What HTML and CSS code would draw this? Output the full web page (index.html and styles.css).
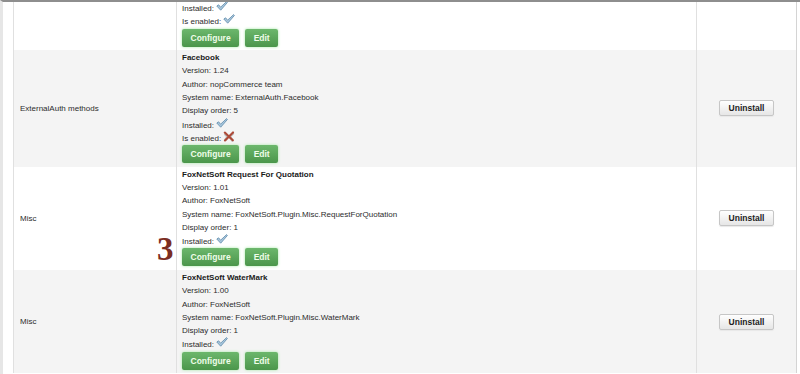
FILE: index.html
```html
<!DOCTYPE html>
<html lang="en">
<head>
    <meta charset="UTF-8">
    <title>Plugins</title>
    <link rel="stylesheet" href="styles.css">
</head>
<body>
    <div class="frame">
        <table class="grid">
            <colgroup>
                <col class="col-group">
                <col class="col-info">
                <col class="col-actions">
            </colgroup>
            <!-- end of the previous plugin -->
            <tr class="row-white">
                <td class="group"></td>
                <td class="info first">
                    <div>Installed: <svg class="ico" viewBox="0 0 12 10"><path d="M0.8 5 L2.6 3.8 L4.6 6.2 L10.6 0.6 L11.4 1.5 L4.7 9.2 Z" fill="#a9c8de" stroke="#6b93b1" stroke-width="0.9" stroke-linejoin="round"/></svg></div>
                    <div>Is enabled: <svg class="ico" viewBox="0 0 12 10"><path d="M0.8 5 L2.6 3.8 L4.6 6.2 L10.6 0.6 L11.4 1.5 L4.7 9.2 Z" fill="#a9c8de" stroke="#6b93b1" stroke-width="0.9" stroke-linejoin="round"/></svg></div>
                    <div class="buttons"><span class="btn-green">Configure</span><span class="btn-green">Edit</span></div>
                </td>
                <td class="actions"></td>
            </tr>
            <tr class="row-gray">
                <td class="group">ExternalAuth methods</td>
                <td class="info">
                    <div class="title">Facebook</div>
                    <div>Version: 1.24</div>
                    <div>Author: nopCommerce team</div>
                    <div>System name: ExternalAuth.Facebook</div>
                    <div>Display order: 5</div>
                    <div>Installed: <svg class="ico" viewBox="0 0 12 10"><path d="M0.8 5 L2.6 3.8 L4.6 6.2 L10.6 0.6 L11.4 1.5 L4.7 9.2 Z" fill="#a9c8de" stroke="#6b93b1" stroke-width="0.9" stroke-linejoin="round"/></svg></div>
                    <div>Is enabled: <svg class="ico cross" viewBox="0 0 12 11"><path d="M2.4 3.4 L4.8 5.8 L2.6 8.6 M9.8 2.6 L6.6 5.6 L9.4 9.4" stroke="#bdbdbd" stroke-width="2.6" fill="none" stroke-linecap="round"/><path d="M1.8 1.6 L9.8 9.2 M10 1.4 L2 9.4" stroke="#ad4a38" stroke-width="2.1" fill="none" stroke-linecap="round"/></svg></div>
                    <div class="buttons"><span class="btn-green">Configure</span><span class="btn-green">Edit</span></div>
                </td>
                <td class="actions"><span class="btn-light">Uninstall</span></td>
            </tr>
            <tr class="row-white">
                <td class="group">Misc</td>
                <td class="info">
                    <div class="title">FoxNetSoft Request For Quotation</div>
                    <div>Version: 1.01</div>
                    <div>Author: FoxNetSoft</div>
                    <div>System name: FoxNetSoft.Plugin.Misc.RequestForQuotation</div>
                    <div>Display order: 1</div>
                    <div>Installed: <svg class="ico" viewBox="0 0 12 10"><path d="M0.8 5 L2.6 3.8 L4.6 6.2 L10.6 0.6 L11.4 1.5 L4.7 9.2 Z" fill="#a9c8de" stroke="#6b93b1" stroke-width="0.9" stroke-linejoin="round"/></svg></div>
                    <div class="buttons"><span class="btn-green">Configure</span><span class="btn-green">Edit</span></div>
                </td>
                <td class="actions"><span class="btn-light">Uninstall</span></td>
            </tr>
            <tr class="row-gray">
                <td class="group">Misc</td>
                <td class="info">
                    <div class="title">FoxNetSoft WaterMark</div>
                    <div>Version: 1.00</div>
                    <div>Author: FoxNetSoft</div>
                    <div>System name: FoxNetSoft.Plugin.Misc.WaterMark</div>
                    <div>Display order: 1</div>
                    <div>Installed: <svg class="ico" viewBox="0 0 12 10"><path d="M0.8 5 L2.6 3.8 L4.6 6.2 L10.6 0.6 L11.4 1.5 L4.7 9.2 Z" fill="#a9c8de" stroke="#6b93b1" stroke-width="0.9" stroke-linejoin="round"/></svg></div>
                    <div class="buttons"><span class="btn-green">Configure</span><span class="btn-green">Edit</span></div>
                </td>
                <td class="actions"><span class="btn-light">Uninstall</span></td>
            </tr>
        </table>
        <!-- annotation number drawn over the screenshot -->
        <span class="step">3</span>
    </div>
</body>
</html>
```

FILE: styles.css
```css
body {
    margin: 0;
    background-color: #fff;
    font-family: "Liberation Sans", Arial, sans-serif;
    font-size: 8px;
    color: #2c2c2c;
}
.frame {
    position: relative;
    border-top: 2px solid #8e8e8e;
    border-left: 3px solid #e6e6e6;
    padding-left: 10px;
    height: 372px;
    overflow: hidden;
}
.grid {
    border-collapse: collapse;
    table-layout: fixed;
    width: 783px;
    border-left: 1px solid #c4ccd4;
    border-right: 1px solid #d4d4d4;
}
.col-group {
    width: 163px;
}
.col-info {
    width: 520px;
}
.col-actions {
    width: 100px;
}
.grid td {
    border-left: 1px solid #e0e0e0;
    vertical-align: middle;
    padding: 0;
}
.row-gray td {
    background-color: #f4f4f4;
}
.group {
    padding-left: 6px !important;
}
.grid td.info {
    vertical-align: top;
    padding: 1px 5px 3.5px 5px;
    line-height: 13.3px;
}
.info div {
    height: 13.3px;
}
.grid td.first {
    padding-top: 0;
}
.first div:first-child {
    margin-top: -1px;
}
.title {
    font-weight: bold;
    color: #1a1a1a;
}
.ico {
    width: 12px;
    height: 10px;
    vertical-align: 0;
}
.ico.cross {
    height: 11px;
    vertical-align: -1px;
}
.info .buttons {
    display: flex;
    gap: 6px;
    height: 18px;
    margin-top: 1px;
}
.btn-green {
    display: inline-block;
    height: 18px;
    line-height: 18px;
    padding: 0 8.5px;
    font-size: 8.5px;
    font-weight: bold;
    color: #effde9;
    background: linear-gradient(#6cb76c, #4b964b);
    border-radius: 2px;
    box-shadow: 0 0 3px #a3e7a3;
}
.actions {
    text-align: center;
}
.btn-light {
    display: inline-block;
    height: 14px;
    line-height: 14px;
    padding: 0 8.5px;
    font-size: 8.5px;
    font-weight: bold;
    color: #222;
    background: linear-gradient(#fefefe, #e6e6e6);
    border: 1px solid #c6c6c6;
    border-radius: 2px;
    box-shadow: 0 1px 1px #e8e8e8;
}
.step {
    position: absolute;
    left: 154px;
    top: 231px;
    font-family: "Liberation Serif", "Times New Roman", serif;
    font-size: 33px;
    font-weight: bold;
    line-height: 1;
    color: #7b2d22;
}
```
